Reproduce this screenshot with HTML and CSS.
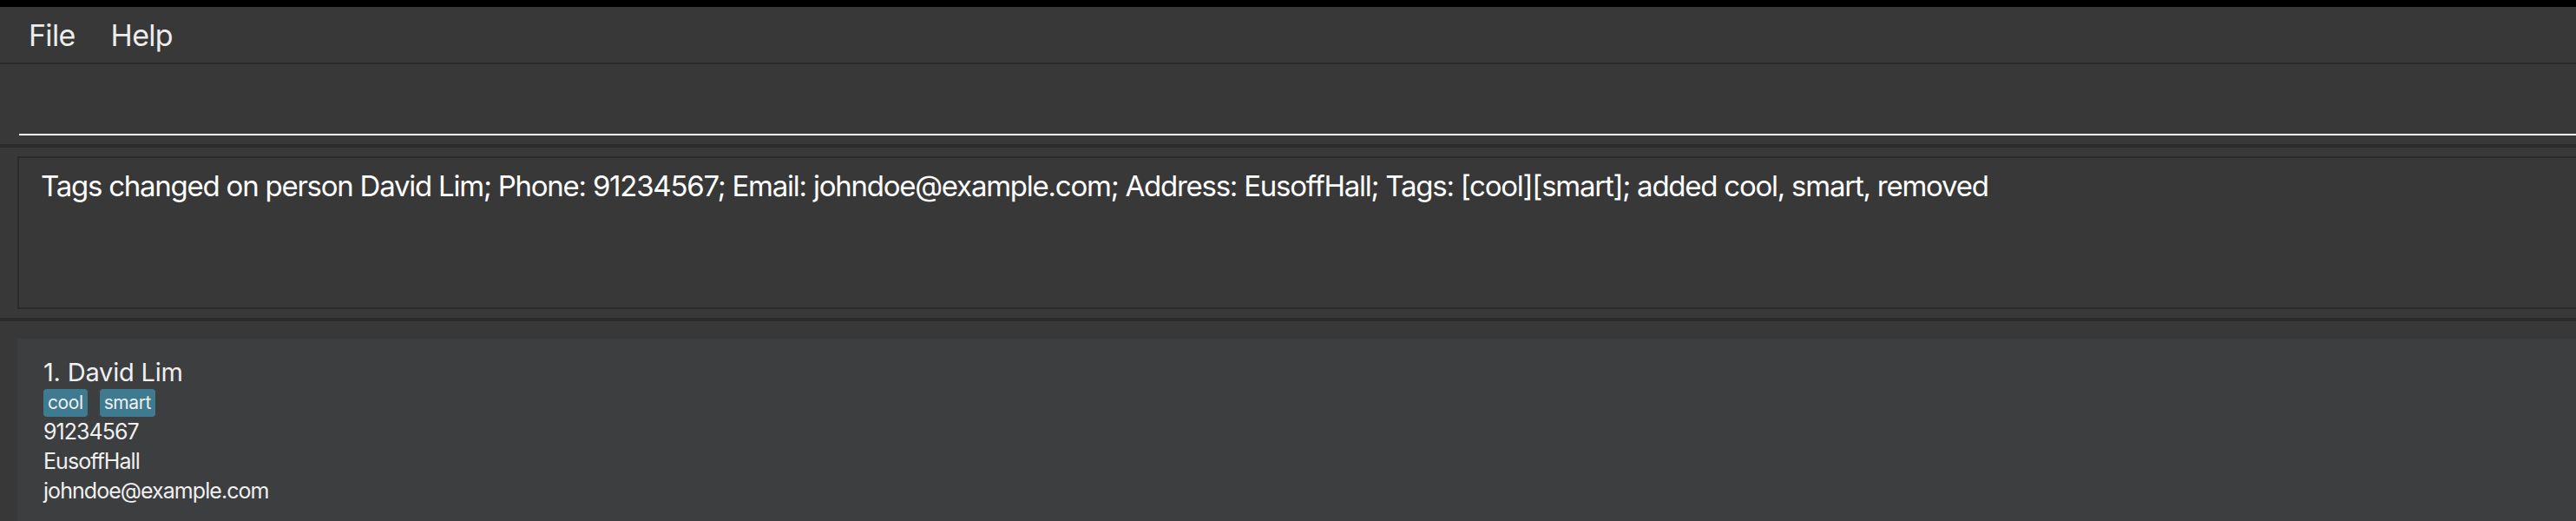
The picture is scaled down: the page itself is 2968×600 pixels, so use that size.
FILE: index.html
```html
<!DOCTYPE html>
<html>
<head>
<meta charset="utf-8">
<link rel="stylesheet" href="styles.css">
</head>
<body>
<div class="topbar"></div>
<div class="menubar">
  <span class="menu-item">File</span>
  <span class="menu-item">Help</span>
</div>
<div class="command-pane">
  <div class="command-field"></div>
</div>
<div class="result-pane">
  <div class="result-box">Tags changed on person David Lim; Phone: 91234567; Email: johndoe@example.com; Address: EusoffHall; Tags: [cool][smart]; added cool, smart, removed</div>
</div>
<div class="list-pane">
  <div class="card">
    <div class="name">1. David Lim</div>
    <div class="tags"><span class="tag">cool</span><span class="tag">smart</span></div>
    <div class="field">91234567</div>
    <div class="field">EusoffHall</div>
    <div class="field">johndoe@example.com</div>
  </div>
</div>
</body>
</html>
```
FILE: styles.css
```css
html, body {
  margin: 0;
  padding: 0;
  background: #383838;
  width: 2968px;
  height: 600px;
  overflow: hidden;
  font-family: Inter, "Liberation Sans", sans-serif;
  color: #f2f2f2;
}
.topbar {
  height: 8px;
  background: #000;
}
.menubar {
  height: 64px;
  display: flex;
  align-items: center;
  padding-left: 33px;
  gap: 41px;
  border-bottom: 2px solid #2b2b2b;
}
.menu-item {
  font-size: 34px;
  letter-spacing: -0.7px;
  color: #ececec;
}
.command-pane {
  height: 96px;
  box-sizing: border-box;
  display: flex;
  align-items: flex-end;
  padding-left: 22px;
  border-bottom: 4px solid #2b2b2b;
}
.command-field {
  flex: 1;
  height: 80px;
  border-bottom: 2px solid #ffffff;
  margin-bottom: 10px;
}
.result-pane {
  padding: 10px 0 10px 20px;
  border-bottom: 4px solid #2b2b2b;
}
.result-box {
  height: 176px;
  border: 2px solid #2b2b2b;
  border-right: none;
  box-sizing: border-box;
  padding: 12px 0 0 25px;
  font-size: 33px;
  letter-spacing: -1.24px;
  color: #ffffff;
  white-space: nowrap;
}
.list-pane {
  padding: 20px 0 0 20px;
}
.card {
  background: #3d3e40;
  height: 220px;
  padding: 22px 0 0 30px;
  box-sizing: border-box;
}
.name {
  font-size: 29px;
  line-height: 34px;
  letter-spacing: -0.2px;
  color: #f0f0f0;
}
.tags {
  display: flex;
  gap: 14px;
  margin-top: 2px;
}
.tag {
  background: #3e7a90;
  border-radius: 4px;
  font-size: 21px;
  letter-spacing: -0.4px;
  line-height: 32px;
  padding: 0 5px;
  color: #f0f0f0;
}
.field {
  font-size: 25px;
  line-height: 34px;
  letter-spacing: -0.95px;
  color: #f0f0f0;
}
```
